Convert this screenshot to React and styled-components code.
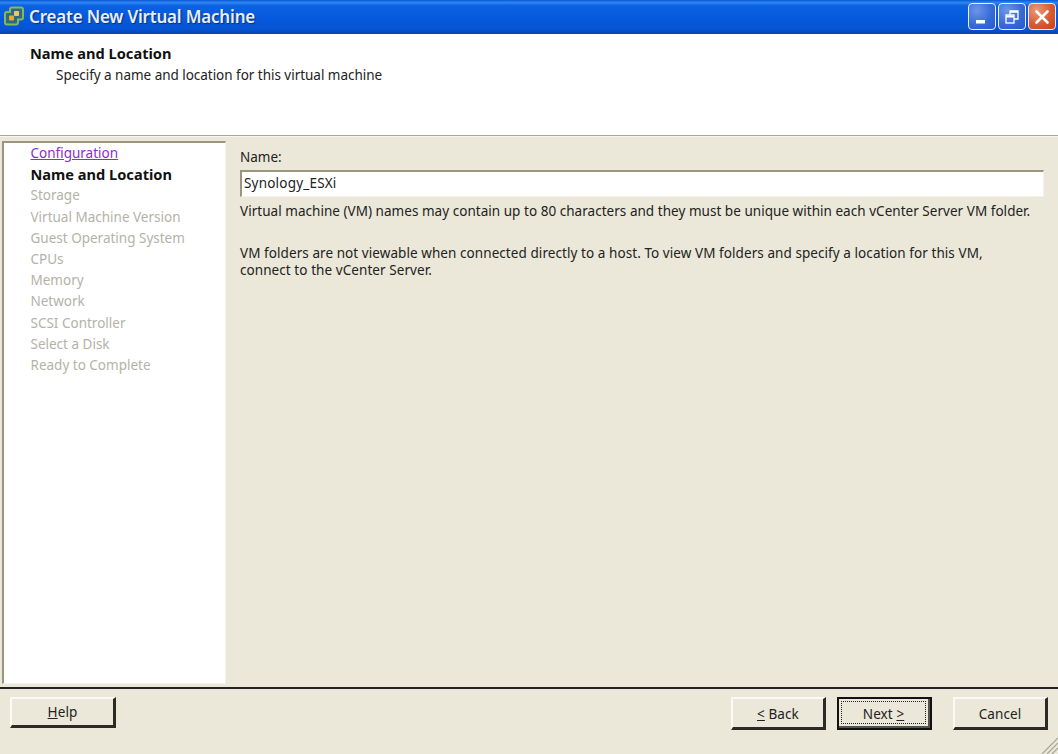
import React from "react";
import styled, { createGlobalStyle } from "styled-components";

const Global = createGlobalStyle`
  html, body { margin: 0; padding: 0; background: #ebe8d9; }
  body { font-family: "Noto Sans", "DejaVu Sans", sans-serif; }
`;
const Win = styled.div`
  width: 1058px; height: 754px; display: flex; flex-direction: column; overflow: hidden;
  background: #ebe8d9; color: #222; position: relative;
  font-size: 13.5px; line-height: 21px;
`;
const TitleBar = styled.header`
  height: 34px; flex: none; display: flex; align-items: center; padding: 0 2px 0 3px; box-sizing: border-box;
  background: linear-gradient(180deg, #0a58d8 0%, #2f88f2 8%, #0b62e2 16%, #0659dc 55%, #0654d4 85%, #0645b0 100%);
`;
const TitleIcon = styled.svg`flex: none; margin-top: -3px;`;
const TitleText = styled.span`
  margin: -2px 0 0 4px; color: #e6effa; font-size: 17px; font-weight: 600; letter-spacing: -0.2px;
  text-shadow: 1px 1px 1px #0a2f80; flex: 1; white-space: nowrap;
`;
const WinBtns = styled.div`display: flex; gap: 2px; margin-top: -1px;`;
const WinBtn = styled.div`
  width: 28px; height: 27px; box-sizing: border-box; border: 1px solid #e8eefb; border-radius: 4px;
  display: flex; align-items: center; justify-content: center;
  background: ${p => p.$close
    ? "radial-gradient(circle at 30% 25%, #eb9a7c, #d85a30 55%, #c8421c)"
    : "radial-gradient(circle at 30% 25%, #6c95ea, #3468d8 60%, #2a56c8)"};
`;
const Header = styled.section`
  height: 102px; flex: none; background: #fff; box-sizing: border-box; padding: 9px 0 0 30px;
  border-bottom: 1px solid #aca899;
`;
const HeaderTitle = styled.div`font-weight: 700; font-size: 14.6px; color: #111;`;
const HeaderSub = styled.div`padding: 1px 0 0 26px; letter-spacing: -0.03px;`;
const Main = styled.main`
  height: 551px; flex: none; display: flex; box-sizing: border-box; padding: 4px 0 3px 2px;
  border-top: 1px solid #f8f7f0;
`;
const Sidebar = styled.nav`
  width: 224px; flex: none; background: #fff; box-sizing: border-box;
  border-top: 2px solid #99957f; border-left: 2px solid #99957f;
  border-right: 1px solid #f4f3ea; border-bottom: 1px solid #f4f3ea;
  padding: 0 0 0 26.5px; display: flex; flex-direction: column;
`;
const Step = styled.div`
  height: 21.2px; line-height: 21.2px; white-space: nowrap;
  color: ${p => p.$kind === "link" ? "#8a2bd8" : p.$kind === "active" ? "#111" : "#b4b2a8"};
  font-weight: ${p => p.$kind === "active" ? 700 : 400};
  font-size: ${p => p.$kind === "active" ? 14.6 : 13.5}px;
  text-decoration: ${p => p.$kind === "link" ? "underline" : "none"};
`;
const Content = styled.div`
  flex: 1; min-width: 0; padding: 6px 14px 0 14px; display: flex; flex-direction: column;
`;
const NameInput = styled.div`
  height: 27px; margin-top: 2px; box-sizing: border-box; background: #fff; line-height: 22px;
  border-top: 2px solid #99957f; border-left: 2px solid #99957f;
  border-right: 1px solid #f4f3ea; border-bottom: 1px solid #f4f3ea; padding-left: 2px; letter-spacing: 0.2px;
`;
const Para = styled.p`
  margin: ${p => p.$gap}px 0 0; white-space: pre-line; line-height: 17px; letter-spacing: ${p => p.$ls}px;
`;
const Footer = styled.footer`
  flex: 1; border-top: 2px solid #222; display: flex; align-items: flex-start; position: relative;
  padding: 8px 10px 0 10px; box-sizing: border-box;
`;
const Btn = styled.button`
  width: ${p => p.$w || 95}px; height: ${p => p.$h || 33}px; margin: 0 ${p => p.$mr || 0}px 0 0;
  background: #ebe8d9; color: #222; font: inherit; font-size: 13.5px;
  padding: ${p => p.$h ? 0 : 3}px 0 0; letter-spacing: 0.1px;
  border-style: solid; border-width: 2px 3px 3px 2px;
  border-color: #fbfaf3 #2b2a24 #2b2a24 #fbfaf3; position: relative;
  ${p => p.$def && `outline: 2px solid #111; outline-offset: -2px; border-width: 2px 4px 4px 2px; border-color:#fbfaf3 #55534a #55534a #fbfaf3;`}
`;
const Focus = styled.span`
  position: absolute; inset: 2px; border: 1.5px dotted #222;
`;
const U = styled.span`text-decoration: underline;`;
const Spacer = styled.div`flex: 1;`;
const Grip = styled.svg`position: absolute; right: 0; bottom: 0;`;

const steps = ["Storage", "Virtual Machine Version", "Guest Operating System", "CPUs", "Memory", "Network", "SCSI Controller", "Select a Disk", "Ready to Complete"];

export default function App() {
  return (
    <Win>
      <Global />
      <TitleBar>
        <TitleIcon width="22" height="22" viewBox="0 0 22 22">
          <path d="M9 2.500h9a2 2 0 0 1 2 2v8a2 2 0 0 1-2 2h-3v3a2 2 0 0 1-2 2H4a2 2 0 0 1-2-2V9a2 2 0 0 1 2-2h3V4.500a2 2 0 0 1 2-2z" fill="#2c6a88" stroke="#86b85a" strokeWidth="2"/>
          <rect x="6" y="10.500" width="5" height="5" rx="0.800" fill="#eaa92c"/>
          <rect x="11" y="6" width="5" height="5" rx="0.800" fill="#f0c65a"/>
        </TitleIcon>
        <TitleText>Create New Virtual Machine</TitleText>
        <WinBtns>
          <WinBtn>
            <svg width="18" height="18" viewBox="0 0 18 18"><rect x="3" y="12" width="9" height="3.500" fill="#fff"/></svg>
          </WinBtn>
          <WinBtn>
            <svg width="18" height="18" viewBox="0 0 18 18" fill="none" stroke="#fff" strokeWidth="1.300">
              <rect x="3" y="7" width="8" height="8"/><path d="M3 8.500h8" strokeWidth="2"/>
              <path d="M7 7V3h8v8h-4M7 4h8" />
            </svg>
          </WinBtn>
          <WinBtn $close>
            <svg width="18" height="18" viewBox="0 0 18 18" stroke="#fff" strokeWidth="2.600" strokeLinecap="round"><path d="M3.500 3.500l11 11M14.500 3.500l-11 11"/></svg>
          </WinBtn>
        </WinBtns>
      </TitleBar>
      <Header>
        <HeaderTitle>Name and Location</HeaderTitle>
        <HeaderSub>Specify a name and location for this virtual machine</HeaderSub>
      </Header>
      <Main>
        <Sidebar>
          <Step $kind="link">Configuration</Step>
          <Step $kind="active">Name and Location</Step>
          {steps.map(s => <Step key={s}>{s}</Step>)}
        </Sidebar>
        <Content>
          <div>Name:</div>
          <NameInput>Synology_ESXi</NameInput>
          <Para $gap={6} $ls={0.035}>Virtual machine (VM) names may contain up to 80 characters and they must be unique within each vCenter Server VM folder.</Para>
          <Para $gap={25} $ls={0.07}>{"VM folders are not viewable when connected directly to a host. To view VM folders and specify a location for this VM,\nconnect to the vCenter Server."}</Para>
        </Content>
      </Main>
      <Footer>
        <Btn $w={106} $h={31}><U>H</U>elp</Btn>
        <Spacer />
        <Btn $mr={11}><U>&lt;</U> Back</Btn>
        <Btn $mr={21} $def><Focus />Next <U>&gt;</U></Btn>
        <Btn>Cancel</Btn>
        <Grip width="18" height="18" viewBox="0 0 18 18" stroke="#a8a594" strokeWidth="1.200">
          <path d="M18 2L2 18M18 7L7 18M18 12L12 18"/>
        </Grip>
      </Footer>
    </Win>
  );
}
